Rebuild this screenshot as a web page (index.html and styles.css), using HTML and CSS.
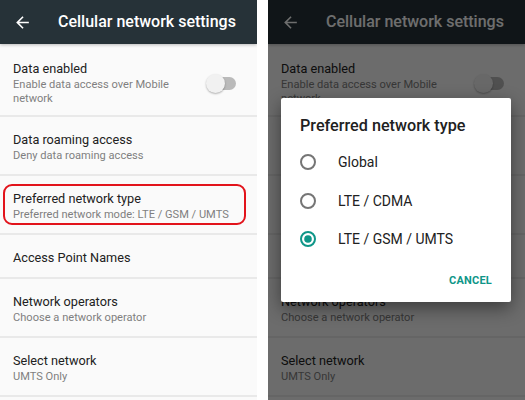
FILE: index.html
```html
<!DOCTYPE html>
<html lang="en">
<head>
<meta charset="utf-8">
<title>Cellular network settings</title>
<link rel="stylesheet" href="styles.css">
</head>
<body>
<div class="screens">
  <section class="phone">
    <header class="appbar">
      <svg class="back" viewBox="0 0 24 24" width="19" height="19"><path d="M20 11H7.83l5.59-5.59L12 4l-8 8 8 8 1.41-1.41L7.83 13H20v-2z" fill="#fff"/></svg>
      <h1 class="appbar-title">Cellular network settings</h1>
    </header>
    <ul class="prefs">
      <li class="pref pref-first">
        <div class="pref-text pref-text-narrow">
          <div class="pref-title">Data enabled</div>
          <div class="pref-sum">Enable data access over Mobile network</div>
        </div>
        <span class="switch"><span class="switch-thumb"></span></span>
      </li>
      <li class="pref">
        <div class="pref-text">
          <div class="pref-title">Data roaming access</div>
          <div class="pref-sum">Deny data roaming access</div>
        </div>
      </li>
      <li class="pref highlight">
        <div class="pref-text">
          <div class="pref-title">Preferred network type</div>
          <div class="pref-sum">Preferred network mode: LTE / GSM / UMTS</div>
        </div>
      </li>
      <li class="pref pref-single">
        <div class="pref-text">
          <div class="pref-title">Access Point Names</div>
        </div>
      </li>
      <li class="pref">
        <div class="pref-text">
          <div class="pref-title">Network operators</div>
          <div class="pref-sum">Choose a network operator</div>
        </div>
      </li>
      <li class="pref">
        <div class="pref-text">
          <div class="pref-title">Select network</div>
          <div class="pref-sum">UMTS Only</div>
        </div>
      </li>
    </ul>
  </section>

  <section class="phone">
    <header class="appbar">
      <svg class="back" viewBox="0 0 24 24" width="19" height="19"><path d="M20 11H7.83l5.59-5.59L12 4l-8 8 8 8 1.41-1.41L7.83 13H20v-2z" fill="#fff"/></svg>
      <h1 class="appbar-title">Cellular network settings</h1>
    </header>
    <ul class="prefs">
      <li class="pref pref-first">
        <div class="pref-text pref-text-narrow">
          <div class="pref-title">Data enabled</div>
          <div class="pref-sum">Enable data access over Mobile network</div>
        </div>
        <span class="switch"><span class="switch-thumb"></span></span>
      </li>
      <li class="pref">
        <div class="pref-text">
          <div class="pref-title">Data roaming access</div>
          <div class="pref-sum">Deny data roaming access</div>
        </div>
      </li>
      <li class="pref">
        <div class="pref-text">
          <div class="pref-title">Preferred network type</div>
          <div class="pref-sum">Preferred network mode: LTE / GSM / UMTS</div>
        </div>
      </li>
      <li class="pref pref-single">
        <div class="pref-text">
          <div class="pref-title">Access Point Names</div>
        </div>
      </li>
      <li class="pref">
        <div class="pref-text">
          <div class="pref-title">Network operators</div>
          <div class="pref-sum">Choose a network operator</div>
        </div>
      </li>
      <li class="pref">
        <div class="pref-text">
          <div class="pref-title">Select network</div>
          <div class="pref-sum">UMTS Only</div>
        </div>
      </li>
    </ul>
    <div class="scrim"></div>
    <div class="dialog">
      <h2 class="dialog-title">Preferred network type</h2>
      <ul class="options">
        <li class="option">
          <svg class="radio" viewBox="0 0 20 20" width="20" height="20"><circle cx="10" cy="10" r="7" fill="none" stroke="#757575" stroke-width="2"/></svg>
          <span class="option-label">Global</span>
        </li>
        <li class="option">
          <svg class="radio" viewBox="0 0 20 20" width="20" height="20"><circle cx="10" cy="10" r="7" fill="none" stroke="#757575" stroke-width="2"/></svg>
          <span class="option-label">LTE / CDMA</span>
        </li>
        <li class="option">
          <svg class="radio" viewBox="0 0 20 20" width="20" height="20"><circle cx="10" cy="10" r="7" fill="none" stroke="#0f9688" stroke-width="2"/><circle cx="10" cy="10" r="3.8" fill="#0f9688"/></svg>
          <span class="option-label">LTE / GSM / UMTS</span>
        </li>
      </ul>
      <div class="dialog-actions">
        <span class="btn-text">CANCEL</span>
      </div>
    </div>
  </section>
</div>
</body>
</html>
```

FILE: styles.css
```css
html, body {
  margin: 0;
  padding: 0;
  background: #ffffff;
}

body {
  font-family: Roboto, "Liberation Sans", Arial, sans-serif;
}

.screens {
  display: flex;
  gap: 11px;
  width: 525px;
  height: 400px;
}

.phone {
  position: relative;
  width: 257px;
  height: 400px;
  background: #fafafa;
  overflow: hidden;
}

.appbar {
  position: relative;
  z-index: 1;
  height: 44px;
  background: #263238;
  display: flex;
  align-items: center;
  padding-left: 13px;
  gap: 26px;
  box-shadow: 0 1px 3px rgba(0, 0, 0, 0.25);
}

.back {
  display: block;
  flex-shrink: 0;
}

.appbar-title {
  margin: 0;
  font-size: 16px;
  font-weight: 500;
  color: #ffffff;
  line-height: 20px;
  white-space: nowrap;
}

.prefs {
  list-style: none;
  margin: 0;
  padding: 0;
}

.pref {
  position: relative;
  display: flex;
  align-items: center;
  padding: 14px 21px 11px 13px;
  border-bottom: 2px solid #e9e9e9;
}

.pref-first {
  padding-top: 16px;
  padding-bottom: 9px;
}

.pref-single {
  padding-bottom: 10px;
}

.pref-text {
  flex: 1;
  min-width: 0;
}

.pref-text-narrow {
  flex: 0 0 175px;
}

.pref-title {
  font-size: 12.7px;
  line-height: 18px;
  color: #212121;
  white-space: nowrap;
}

.pref-sum {
  font-size: 11.1px;
  line-height: 14px;
  color: #7f7f7f;
  white-space: nowrap;
}

.pref-text-narrow .pref-sum {
  white-space: normal;
}

.highlight::after {
  content: "";
  position: absolute;
  top: 8px;
  bottom: 8px;
  left: 3px;
  right: 11px;
  border: 2px solid #e2131b;
  border-radius: 9px;
}

.switch {
  margin-left: auto;
  width: 26px;
  height: 13px;
  border-radius: 7px;
  background: #bababa;
  display: flex;
  align-items: center;
  flex-shrink: 0;
}

.switch-thumb {
  width: 19px;
  height: 19px;
  border-radius: 50%;
  margin-left: -4px;
  background: #f1f1f1;
  box-shadow: 0 1px 2px rgba(0, 0, 0, 0.3);
}

.scrim {
  position: absolute;
  inset: 0;
  z-index: 2;
  background: rgba(0, 0, 0, 0.57);
}

.dialog {
  position: absolute;
  z-index: 3;
  left: 13px;
  top: 98px;
  width: 230px;
  height: 204px;
  box-sizing: border-box;
  padding-top: 18px;
  background: #ffffff;
  border-radius: 2px;
  box-shadow: 0 6px 18px rgba(0, 0, 0, 0.45);
}

.dialog-title {
  margin: 0;
  padding-left: 19px;
  font-size: 16.2px;
  font-weight: 500;
  line-height: 20px;
  color: #212121;
  white-space: nowrap;
}

.options {
  list-style: none;
  margin: 7px 0 0;
  padding: 0;
}

.option {
  height: 38.5px;
  display: flex;
  align-items: center;
  gap: 20px;
  padding-left: 17px;
}

.radio {
  display: block;
  flex-shrink: 0;
}

.option-label {
  font-size: 14px;
  color: #212121;
}

.dialog-actions {
  margin-top: 4px;
  height: 36px;
  display: flex;
  align-items: center;
  justify-content: flex-end;
  padding-right: 19px;
}

.btn-text {
  font-size: 11px;
  font-weight: 700;
  color: #0f9688;
  letter-spacing: 0.2px;
}
```
